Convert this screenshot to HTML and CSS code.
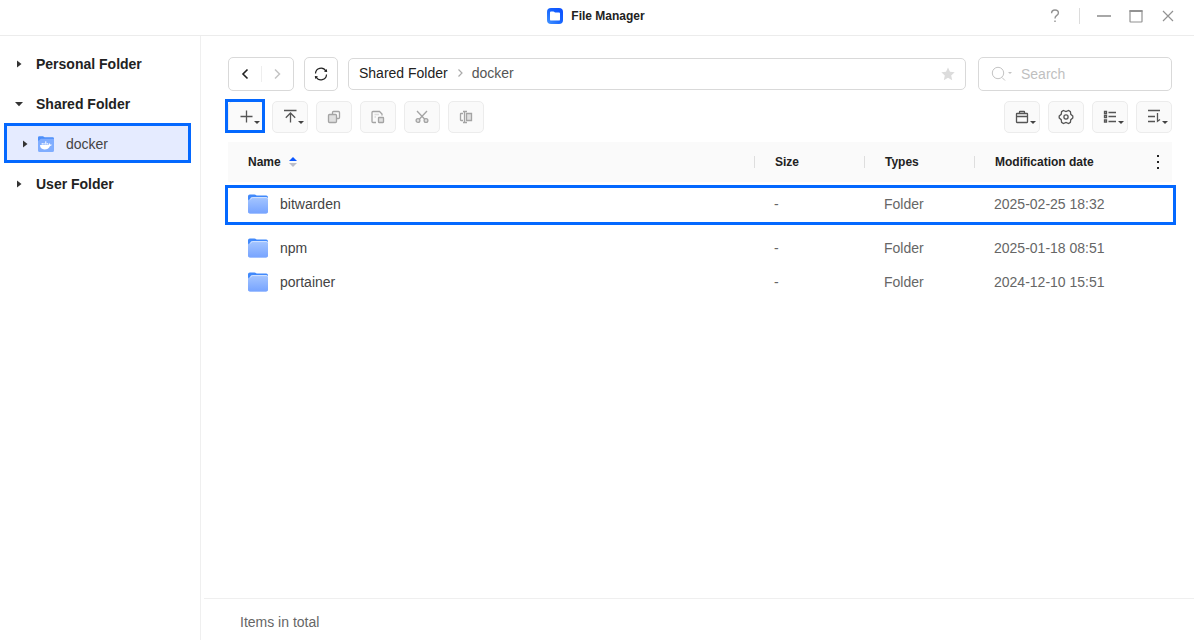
FILE: index.html
```html
<!DOCTYPE html>
<html lang="en">
<head>
<meta charset="utf-8">
<title>File Manager</title>
<link rel="stylesheet" href="styles.css">
</head>
<body>
<svg class="defs" aria-hidden="true">
  <defs>
    <linearGradient id="folder-front" x1="0" y1="0" x2="0" y2="1">
      <stop offset="0" stop-color="#a0c2ff"/><stop offset="1" stop-color="#76a3ff"/>
    </linearGradient>
    <linearGradient id="logo-fill" x1="0" y1="1" x2="1" y2="0">
      <stop offset="0" stop-color="#4595ff"/><stop offset="0.5" stop-color="#1766ff"/><stop offset="1" stop-color="#0b4dff"/>
    </linearGradient>
    <symbol id="folder" viewBox="0 0 20 20">
      <path fill="#4189fb" d="M0 2.2Q0 .4 1.8.4H6.5Q7.5.4 8.2 1.2L8.8 1.6H18.2Q20 1.6 20 3.4V10H0Z"/>
      <path fill="#a0c2ff" d="M0 7Q0 5.6 1 5.4Q2 5.2 2.3 4.4Q2.8 3 4.2 3H18.4Q20 3 20 4.6V17.6Q20 19.6 18 19.6H2Q0 19.6 0 17.6Z"/>
      <path fill="url(#folder-front)" d="M0 7.6Q2.2 7.4 3 5.8Q3.6 4.8 5 4.8H20V17.6Q20 19.6 18 19.6H2Q0 19.6 0 17.6Z"/>
      <path fill="none" stroke="#d3e4ff" stroke-width="1" d="M2.6 5.4Q3 3.6 4.6 3.6H18.4Q19.4 3.6 19.5 4.6"/>
    </symbol>
  </defs>
</svg>

<header class="titlebar">
  <div class="app-title">
    <svg class="logo" viewBox="0 0 16 16" aria-hidden="true"><rect width="16" height="16" rx="4" fill="url(#logo-fill)"/><path fill="#fff" d="M3 4.6Q3 3.6 4 3.6H6.4Q7 3.6 7.4 4L8 4.6H12Q13 4.6 13 5.6V11.4Q13 12.6 11.8 12.6H4.2Q3 12.6 3 11.4Z"/></svg>
    <h1>File Manager</h1>
  </div>
  <div class="window-actions">
    <button class="window-button" aria-label="Help"><svg viewBox="0 0 16 16"><path stroke-width="1.4" d="M4.6 5.2Q4.6 2 8 2Q11.4 2 11.4 4.9Q11.4 6.5 9.5 7.6Q8 8.6 8 10.6M8 12.4V14"/></svg></button>
    <span class="window-divider"></span>
    <button class="window-button" aria-label="Minimize"><svg viewBox="0 0 16 16"><path stroke-width="1.6" d="M1 8H15"/></svg></button>
    <button class="window-button" aria-label="Maximize"><svg viewBox="0 0 16 16"><rect x="2" y="2.5" width="12" height="11.5" rx="0.5"/><path stroke-width="2" d="M1.5 3H14.5"/></svg></button>
    <button class="window-button" aria-label="Close"><svg viewBox="0 0 16 16"><path d="M3 3L13 13M13 3L3 13"/></svg></button>
  </div>
</header>

<div class="workspace">
  <nav class="sidebar" aria-label="Folders">
    <a class="tree-item" href="#personal"><svg class="arrow" viewBox="0 0 8 8"><path d="M2 .5L6.5 4L2 7.5Z"/></svg>Personal Folder</a>
    <a class="tree-item" href="#shared"><svg class="arrow" viewBox="0 0 8 8"><path d="M0 2L8 2L4 6.2Z"/></svg>Shared Folder</a>
    <a class="tree-item tree-child" href="#docker" aria-current="page"><svg class="arrow" viewBox="0 0 8 8"><path d="M2 .5L6.5 4L2 7.5Z"/></svg><svg class="docker-icon" viewBox="0 0 16 16" aria-hidden="true"><path fill="#4b8efa" d="M0 1.6Q0 .3 1.4.3H5L6.6 1.2H14.6Q16 1.2 16 2.6V8H0Z"/><path fill="#80adff" d="M0 4.8Q1.6 4.6 2.2 3.3Q2.5 2.7 3.3 2.7H16V14.4Q16 16 14.4 16H1.6Q0 16 0 14.4Z"/><path fill="#fff" d="M2 9H10.7Q10.2 7.7 11.2 6.9Q12 7.6 12 8.5Q13.3 8.2 14 8.8Q13.5 9.9 12 9.9Q10.6 13.4 6.4 13.4Q2.2 13.4 2 9ZM3.6 7.2H5V8.5H3.6ZM5.3 7.2H6.7V8.5H5.3ZM7 7.2H8.4V8.5H7ZM8.7 7.2H10V8.5H8.7ZM7 5.4H8.4V6.8H7Z"/></svg>docker</a>
    <a class="tree-item" href="#user"><svg class="arrow" viewBox="0 0 8 8"><path d="M2 .5L6.5 4L2 7.5Z"/></svg>User Folder</a>
  </nav>

  <div class="content">
    <main class="browser">
      <div class="location">
        <div class="history">
          <button aria-label="Back"><svg class="icon dark" viewBox="0 0 16 16"><path stroke-width="1.6" d="M10.5 3.5L6 8L10.5 12.5"/></svg></button>
          <button aria-label="Forward" class="forward"><svg class="icon pale" viewBox="0 0 16 16"><path stroke-width="1.5" d="M6 3.5L10.5 8L6 12.5"/></svg></button>
        </div>
        <button class="refresh" aria-label="Refresh"><svg class="icon dark" viewBox="0 0 16 16"><path stroke-width="1.2" d="M2.5 7.5A5.5 5.5 0 0 1 12.8 5M13.5 8.5A5.5 5.5 0 0 1 3.2 11"/><path class="solid" d="M11 5.8L14.2 6L13.8 3ZM5 10.2L1.8 10L2.2 13Z"/></svg></button>
        <div class="pathbar">
          <a href="#shared">Shared Folder</a>
          <svg class="crumb" viewBox="0 0 8 8"><path d="M2.5 .5L6 4L2.5 7.5"/></svg>
          <a class="current" href="#docker">docker</a>
          <button class="star" aria-label="Add to favorites"><svg viewBox="0 0 16 16"><path d="M8 1.5L10 5.8L14.7 6.3L11.2 9.5L12.2 14.2L8 11.8L3.8 14.2L4.8 9.5L1.3 6.3L6 5.8Z"/></svg></button>
        </div>
        <div class="search">
          <svg class="search-icon" viewBox="0 0 22 16" aria-hidden="true"><circle cx="7" cy="7" r="5.7"/><path d="M11 11.5L14 14.5"/><path class="solid" d="M17 6H21L19 8Z"/></svg>
          <input type="search" aria-label="Search" placeholder="Search">
        </div>
      </div>

      <div class="toolbar">
        <button class="tool marked" aria-label="New"><svg class="icon" viewBox="0 0 16 16"><path d="M2.5 7.5H14.5M8.5 1.5V13.5"/></svg><span class="caret"></span></button>
        <button class="tool" aria-label="Upload"><svg class="icon" viewBox="0 0 16 16"><path d="M2 1.5H14.5M8.5 13.5V4M3.8 8.7L8.5 4L13.2 8.7"/></svg><span class="caret"></span></button>
        <button class="tool off" aria-label="Copy" disabled><svg class="icon" viewBox="0 0 16 16"><path d="M6.5 5.5V3.5Q6.5 2.5 7.5 2.5H12.5Q13.5 2.5 13.5 3.5V8.5Q13.5 9.5 12.5 9.5H10.5"/><rect class="fill" x="2.5" y="5.5" width="8" height="8" rx="1"/></svg></button>
        <button class="tool off" aria-label="Paste" disabled><svg class="icon" viewBox="0 0 16 16"><path d="M6 13.5H3Q2 13.5 2 12.5V3.5Q2 2.5 3 2.5H9.5L12 5V6.5"/><path stroke-opacity=".35" d="M4.5 5.5H9M4.5 8H6"/><rect class="fill" x="8.5" y="8.5" width="5" height="5" rx=".5"/></svg></button>
        <button class="tool off" aria-label="Cut" disabled><svg class="icon" viewBox="0 0 16 16"><path d="M3 2L11 10.5M13 2L5 10.5"/><circle class="fill" cx="4" cy="11.5" r="1.9"/><circle class="fill" cx="12" cy="11.5" r="1.9"/></svg></button>
        <button class="tool off" aria-label="Rename" disabled><svg class="icon" viewBox="0 0 16 16"><path d="M5 4.5H3Q2.5 4.5 2.5 5V11Q2.5 11.5 3 11.5H5"/><path class="fill" d="M8.5 4.5H13.5V11.5H8.5Z"/><path d="M5 2.5H9M5 13.5H9M6.5 2.5V13.5"/></svg></button>
        <span class="spacer"></span>
        <button class="tool" aria-label="Tools"><svg class="icon" viewBox="0 0 16 16"><rect x="2.5" y="4.5" width="11" height="9" rx=".5"/><path d="M5.5 4.5V3Q5.5 2.5 6 2.5H10Q10.5 2.5 10.5 3V4.5M2.5 7.5H13.5"/></svg><span class="caret"></span></button>
        <button class="tool" aria-label="Settings"><svg class="icon" viewBox="0 0 16 16"><path d="M5.4 1.5L8 2.5L10.6 1.5L12.4 2.6L12.8 5.3L14.8 7V9L12.8 10.7L12.4 13.4L10.6 14.5L8 13.5L5.4 14.5L3.6 13.4L3.2 10.7L1.2 9V7L3.2 5.3L3.6 2.6Z"/><circle cx="8" cy="8" r="2.1"/></svg></button>
        <button class="tool" aria-label="View mode"><svg class="icon" viewBox="0 0 16 16"><path d="M2.5 2.5H4.5V4.5H2.5ZM2.5 6.5H4.5V8.5H2.5ZM2.5 11H4.5V13H2.5ZM6.5 3.5H14M6.5 7.5H14M6.5 12.5H14"/></svg><span class="caret"></span></button>
        <button class="tool" aria-label="Sort"><svg class="icon" viewBox="0 0 16 16"><path d="M2 1.5H14M2 7.5H9M2 12.5H9M11.5 4V12.3L14 10.5"/></svg><span class="caret"></span></button>
      </div>

      <table class="files">
        <colgroup><col><col class="col-size"><col class="col-type"><col class="col-date"></colgroup>
        <thead>
          <tr>
            <th scope="col"><div class="head">Name<svg class="sort" viewBox="0 0 8 10"><path fill="#0b57ff" d="M0 4L4 0L8 4Z"/><path fill="#b9bcc9" d="M0 6L4 10L8 6Z"/></svg></div></th>
            <th scope="col"><div class="head">Size</div></th>
            <th scope="col"><div class="head">Types</div></th>
            <th scope="col"><div class="head date-head">Modification date<button class="more" aria-label="Choose columns"><svg viewBox="0 0 4 14"><path d="M1 0H3V2H1ZM1 6H3V8H1ZM1 12H3V14H1Z"/></svg></button></div></th>
          </tr>
        </thead>
        <tbody>
          <tr class="selected"><td><div class="name"><svg viewBox="0 0 20 20"><use href="#folder"/></svg>bitwarden</div></td><td>-</td><td>Folder</td><td>2025-02-25 18:32</td></tr>
          <tr class="after-selected"><td><div class="name"><svg viewBox="0 0 20 20"><use href="#folder"/></svg>npm</div></td><td>-</td><td>Folder</td><td>2025-01-18 08:51</td></tr>
          <tr><td><div class="name"><svg viewBox="0 0 20 20"><use href="#folder"/></svg>portainer</div></td><td>-</td><td>Folder</td><td>2024-12-10 15:51</td></tr>
        </tbody>
      </table>
    </main>
    <footer class="status">Items in total</footer>
  </div>
</div>
</body>
</html>
```
FILE: styles.css
```css
* { box-sizing: border-box; }
body {
  margin: 0;
  min-height: 100vh;
  display: flex;
  flex-direction: column;
  background: #fff;
  color: #222;
  font: 14px/20px "Liberation Sans", Arial, sans-serif;
}
.defs { position: absolute; width: 0; height: 0; }
button { padding: 0; border: 0; background: none; color: inherit; font: inherit; }
a { color: inherit; text-decoration: none; }
svg { display: block; flex: none; }

.titlebar {
  display: grid;
  grid-template-columns: 1fr auto 1fr;
  align-items: center;
  height: 36px;
  padding: 0 18px 4px 16px;
  border-bottom: 1px solid #ececec;
}
.app-title { grid-column: 2; display: flex; align-items: center; gap: 8px; }
.app-title h1 { margin: 0; font-size: 12px; }
.logo { width: 16px; height: 16px; }
.window-actions { grid-column: 3; justify-self: end; display: flex; align-items: center; gap: 16px; }
.window-button svg { width: 16px; height: 16px; fill: none; stroke: #929292; stroke-width: 1.2; }
.window-divider { width: 1px; height: 16px; background: #dcdcdc; }

.workspace { flex: 1; display: flex; }
.sidebar { width: 201px; padding-top: 8px; border-right: 1px solid #efefef; }
.tree-item { display: flex; align-items: center; height: 40px; padding-left: 15px; gap: 13px; font-weight: bold; }
.arrow { width: 8px; height: 8px; fill: #333; }
.tree-child {
  height: 40px;
  margin: -1px 9px 1px 4px;
  padding: 2px 0 0 14px;
  gap: 12px;
  border: 3px solid #0468ff;
  background: #e5ebff;
  color: #444;
  font-weight: normal;
}
.docker-icon { width: 16px; height: 16px; margin-left: -3px; }

.content { flex: 1; min-width: 0; display: flex; flex-direction: column; }
.browser { flex: 1; padding: 21px 22px 0 27px; }
.location { display: flex; align-items: center; }
.history, .refresh, .pathbar, .search { border: 1px solid #d9d9d9; border-radius: 5px; background: #fff; }
.history { display: flex; align-items: center; width: 66px; height: 34px; margin-right: 10px; }
.history button { flex: 1; display: flex; justify-content: center; }
.history .forward { border-left: 1px solid #eee; }
.refresh { display: flex; align-items: center; justify-content: center; width: 34px; height: 34px; margin-right: 10px; }
.icon { width: 16px; height: 16px; fill: none; stroke: #555; stroke-width: 1.3; }
.dark { stroke: #222; }
.dark .solid { fill: #222; stroke: none; }
.pale { stroke: #c4c4c4; }
.pathbar { flex: 1; display: flex; align-items: center; gap: 8px; height: 32px; margin-right: 12px; padding: 0 9px 2px 10px; }
.pathbar .current { color: #555; }
.crumb { width: 8px; height: 8px; fill: none; stroke: #aaa; stroke-width: 1.2; }
.star { margin-left: auto; padding-top: 2px; }
.star svg { width: 16px; height: 16px; fill: #dcdcdc; }
.search { display: flex; align-items: center; gap: 8px; width: 194px; height: 34px; padding: 0 12px; }
.search-icon { width: 22px; height: 16px; fill: none; stroke: #c4c4c4; }
.search-icon .solid { fill: #c4c4c4; stroke: none; }
.search input { flex: 1; min-width: 0; padding: 0; border: 0; outline: 0; background: none; font: inherit; color: #333; }
.search input::placeholder { color: #bfbfbf; }

.toolbar { display: flex; gap: 8px; margin-top: 10px; }
.tool {
  position: relative;
  display: flex;
  align-items: center;
  justify-content: center;
  width: 36px;
  height: 32px;
  border: 1px solid #ececec;
  border-radius: 5px;
  background: #fafafa;
}
.off .icon { stroke: #a4a4a4; }
.off .fill { fill: #e0e0e0; }
.caret { position: absolute; right: 3px; bottom: 8px; border: solid transparent; border-width: 3px 3px 0; border-top-color: #444; }
.marked::after { content: ""; position: absolute; inset: -3px -2px -1px -4px; border: 3px solid #0468ff; }
.spacer { flex: 1; }

.files { width: 100%; margin-top: 9px; table-layout: fixed; border-collapse: collapse; }
.col-size, .col-type { width: 110px; }
.col-date { width: 198px; }
.files th { height: 40px; padding: 0; background: #fafafa; text-align: left; font-size: 12px; line-height: 12px; }
.head { display: flex; align-items: center; gap: 8px; padding-left: 20px; }
th + th .head { border-left: 1px solid #dedede; }
.sort { width: 8px; height: 10px; }
.date-head { padding-right: 12px; }
.more { height: 12px; margin-left: auto; display: flex; align-items: center; }
.more svg { width: 4px; height: 14px; fill: #222; }
.files td { height: 34px; padding: 0 0 0 20px; color: #666; }
.name { display: flex; align-items: center; gap: 12px; color: #444; }
.name svg { width: 20px; height: 20px; }
.selected { position: relative; }
.files .selected td { height: 44px; }
.files .after-selected td { height: 39px; padding-top: 5px; }
.selected td:first-child::after { content: ""; position: absolute; inset: 3px -4px 1px -3px; border: 3px solid #0468ff; pointer-events: none; }

.status { height: 42px; margin-left: 3px; padding: 13px 36px 0; border-top: 1px solid #efefef; color: #666; }
```
